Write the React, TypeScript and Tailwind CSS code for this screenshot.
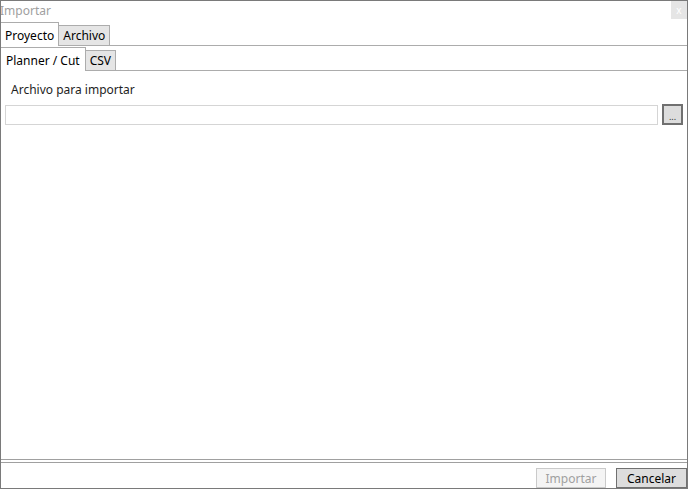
import React from "react";

export default function App() {
  return (
    <div
      className="w-[688px] h-[489px] border border-[#7a7a7a] bg-white flex flex-col text-[12px] text-black overflow-hidden"
      style={{ fontFamily: '"Noto Sans", "Open Sans", sans-serif' }}
    >
      {/* Title bar */}
      <div className="h-[21px] flex items-start justify-between">
        <span className="text-[#a0a0a0] leading-[16px] mt-[2px] -ml-[1px]">Importar</span>
        <div className="w-[16px] h-[18px] bg-[#e5e5e5] flex items-center justify-center text-white text-[10px] leading-none">
          x
        </div>
      </div>

      {/* Outer tabs */}
      <div className="h-[24px] flex items-end border-b border-[#acacac]">
        <div className="h-[24px] -mb-[1px] bg-white border-t border-r border-[#acacac] px-[4px] pt-[5px] leading-[16px] relative z-10">
          Proyecto
        </div>
        <div className="h-[20px] bg-[#e5e5e5] border-t border-r border-[#acacac] px-[4px] pt-[2px] leading-[16px]">
          Archivo
        </div>
      </div>

      {/* Inner content */}
      <div className="flex-1 flex flex-col">
        <div className="h-[25px] flex items-end border-b border-[#acacac]">
          <div className="h-[24px] -mb-[1px] bg-white border-t border-r border-[#acacac] px-[5px] pt-[5px] leading-[16px] relative z-10">
            Planner / Cut
          </div>
          <div className="h-[20px] bg-[#e5e5e5] border-t border-r border-[#acacac] px-[4px] pt-[2px] leading-[16px]">
            CSV
          </div>
        </div>

        <div className="pl-[10px] pt-[11px] text-[#1e1e1e] leading-[16px]">Archivo para importar</div>

        <div className="flex items-center mt-[6px] pl-[4px] pr-[4px] gap-[4px]">
          <div className="flex-1 h-[20px] border border-[#d5d5d5] bg-white" />
          <div className="w-[21px] h-[21px] bg-[#dddddd] border-2 border-[#707070] flex items-end justify-center text-[9px] leading-[12px] text-[#333]">
            ...
          </div>
        </div>

        <div className="flex-1" />
      </div>

      {/* Bottom separator */}
      <div className="border-t border-[#a0a0a0] h-[3px]" />
      <div className="border-t border-[#a0a0a0]" />

      {/* Buttons */}
      <div className="flex justify-end gap-[10px] pt-[5px]">
        <div className="w-[70px] h-[20px] border border-[#cacaca] bg-[#f4f4f4] text-[#a0a0a0] flex items-center justify-center leading-[16px] pt-[2px]">
          Importar
        </div>
        <div className="w-[71px] h-[20px] border border-[#707070] bg-[#dddddd] text-black flex items-center justify-center leading-[16px] pt-[2px]">
          Cancelar
        </div>
      </div>
    </div>
  );
}
